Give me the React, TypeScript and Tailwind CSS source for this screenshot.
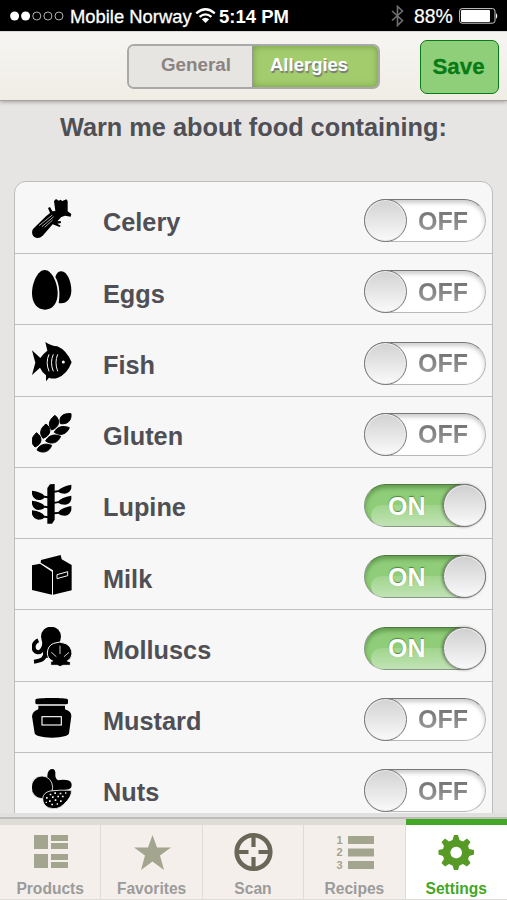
import { useState } from "react"
import type { ReactNode } from "react"

const allergens: { name: string; on: boolean; icon: ReactNode }[] = [
  {
    name: "Celery",
    on: false,
    icon: (
      <>
        <path d="M3 90 L42 52 L54 42 L48 27 L54 24 L61 37 L70 36 L66 6 L72 0 L80 5 L85 2 L91 6 L103 1 L107 6 L107 37 L118 45 L116 53 L99 50 L88 54 L76 67 L86 66 L87 72 L76 74 L86 80 L83 84 L62 76 L32 110 Q19 122 6 113 Q-4 104 3 90Z" />
        <path d="M21 80 L61 48 M30 83 L65 53 M38 85 L62 63" stroke="#f7f7f7" strokeWidth="2" fill="none" />
      </>
    ),
  },
  {
    name: "Eggs",
    on: false,
    icon: (
      <>
        <path d="M88 4 C106 4 119 37 118 63 C117 88 102 104 80 99 C84 80 84 43 70 21 C74 9 80 4 88 4Z" />
        <path d="M38 0 C60 0 77 40 77 70 C77 101 61 119 39 119 C16 119 0 100 0 70 C0 39 17 0 38 0Z" />
      </>
    ),
  },
  {
    name: "Fish",
    on: false,
    icon: (
      <>
        <path d="M0 25 L25 48 Q31 37 46 26 L40 0 Q57 12 76 13 Q103 24 119 61 Q105 98 76 108 Q62 112 51 107 L42 118 L42 100 Q30 91 24 77 L0 99 L10 62Z" />
        <path d="M51 37 Q40 61 51 88 M64 37 Q53 61 64 88 M77 37 Q67 61 77 88" fill="none" stroke="#f7f7f7" strokeWidth="3" />
        <circle cx="94" cy="60" r="4.5" fill="#f7f7f7" />
      </>
    ),
  },
  {
    name: "Gluten",
    on: false,
    icon: (
      <g stroke="#000" strokeWidth="3" strokeLinejoin="round">
        <path d="M117 2 C90 0 80 13 85 32 C108 35 119 22 117 2Z" />
        <path d="M69 7 C49 22 48 38 59 51 C82 43 87 22 69 7Z" />
        <path d="M42 33 C23 47 22 63 33 76 C56 68 61 47 42 33Z" />
        <path d="M14 59 C-3 72 -4 91 9 102 C31 93 33 74 14 59Z" />
        <path d="M112 44 C91 36 74 42 67 58 C85 70 104 64 112 44Z" />
        <path d="M86 70 C66 61 48 68 41 84 C59 96 78 90 86 70Z" />
        <path d="M59 97 C40 89 22 95 15 111 C32 123 52 117 59 97Z" />
      </g>
    ),
  },
  {
    name: "Lupine",
    on: true,
    icon: (
      <>
        <path d="M46 12 L54 1 L68 0 V107 L60 119 H46Z" />
        <path d="M66 20 L79 19 Q88 8 118 2 V13 Q114 28 99 29 Q85 29 79 24 L66 26Z M66 54 L79 52 Q88 40 118 35 V46 Q114 62 99 62 Q85 62 79 57 L66 59Z M66 85 L79 84 Q88 71 118 66 V78 Q114 94 99 95 Q85 95 79 89 L66 91Z" />
        <path d="M48 37 L37 35 Q29 24 0 20 V31 Q5 47 19 48 Q32 48 37 41 L48 43Z M48 67 L37 65 Q29 54 0 50 V61 Q5 77 19 78 Q32 78 37 71 L48 73Z M48 97 L37 95 Q29 83 0 79 V91 Q5 106 19 107 Q32 107 37 101 L48 103Z" />
      </>
    ),
  },
  {
    name: "Milk",
    on: true,
    icon: (
      <>
        <path d="M27 15 L86 0 L89 13 L119 30 V106 L63 119 V46 L26 23Z" />
        <path d="M0 31 L24 26 L60 50 V119 L0 105Z" />
        <path d="M75 59 L107 50 V62 L75 71Z" fill="none" stroke="#f7f7f7" strokeWidth="3" />
      </>
    ),
  },
  {
    name: "Molluscs",
    on: true,
    icon: (
      <>
        <circle cx="57" cy="29" r="30" />
        <path d="M19 40 C0 48 1 74 17 76 C29 77 34 66 38 48" fill="none" stroke="#000" strokeWidth="12" />
        <path d="M30 40 H54 V92 H38 L33 72Z" />
        <path d="M40 74 C40 94 32 101 6 104" fill="none" stroke="#000" strokeWidth="12" />
        <path d="M62 102 Q46 95 46 78 Q47 56 65 49 Q83 41 102 50 Q120 60 120 81 Q119 95 106 102 L115 104 V115 H94 L84 119 L76 115 H56 V103Z" stroke="#f7f7f7" strokeWidth="3" />
        <path d="M84 56 V81 M58 76 L73 89 M111 76 L96 89" stroke="#f7f7f7" strokeWidth="2.5" />
      </>
    ),
  },
  {
    name: "Mustard",
    on: false,
    icon: (
      <>
        <path d="M10 6 Q10 1 28 1 Q60 -2 91 1 Q108 1 108 6 V15 Q108 19 102 19 H16 Q10 19 10 15Z" />
        <path d="M19 23 H99 V34 Q119 40 118 55 L111 106 Q108 118 60 119 Q12 118 8 106 L0 55 Q1 40 19 34Z" />
        <rect x="30" y="56" width="58" height="25" fill="none" stroke="#f7f7f7" strokeWidth="3.5" />
      </>
    ),
  },
  {
    name: "Nuts",
    on: false,
    icon: (
      <>
        <path d="M46 20 Q48 0 60 0 Q72 0 70 17 Q69 27 78 34 Q88 31 103 33 Q119 35 119 48 Q119 61 104 62 L65 65 L45 45Z" />
        <ellipse cx="30" cy="55" rx="32" ry="34" stroke="#f7f7f7" strokeWidth="2.5" />
        <path d="M32 88 Q34 71 54 66 Q84 62 118 64 Q121 83 94 107 Q76 125 49 116 Q32 108 32 88Z" stroke="#f7f7f7" strokeWidth="2.5" />
        <path d="M53 74h5v5h-5z M67 70h5v5h-5z M83 71h5v5h-5z M99 70h4v4h-4z M42 84h5v5h-5z M60 82h5v5h-5z M76 80h5v5h-5z M90 80h5v5h-5z M51 94h5v5h-5z M68 91h5v5h-5z M84 94h5v5h-5z M41 98h4v4h-4z M58 104h5v5h-5z M74 103h4v4h-4z" fill="#f7f7f7" />
      </>
    ),
  },
]

const tabs: { name: string; icon: ReactNode }[] = [
  {
    name: "Products",
    icon: (
      <g fill="#a3a58e">
        <path d="M4 3h14v14H4z M4 22h14v14H4z M21 3h17v6H21z M21 11h17v6H21z M21 22h17v6H21z M21 30h17v6H21z" />
      </g>
    ),
  },
  {
    name: "Favorites",
    icon: <path fill="#a3a58e" d="M20.5 3 L25 15.5 H39 L28 23.5 L32 38 L20.5 29.5 L9 38 L13 23.5 L2 15.5 H16Z" />,
  },
  {
    name: "Scan",
    icon: (
      <g fill="none" stroke="#6a6658">
        <circle cx="20.5" cy="20" r="16.8" strokeWidth="4.6" />
        <path d="M20.5 4V15 M20.5 25V36 M4.5 20H15.5 M25.5 20H36.5" strokeWidth="4.2" />
      </g>
    ),
  },
  {
    name: "Recipes",
    icon: (
      <g fill="#a3a58e">
        <path d="M14 4h26v8H14z M14 16.5h26v8H14z M14 29h26v8H14z" />
        <g fontSize="11" fontWeight="bold">
          <text x="2.5" y="11.7">1</text>
          <text x="2.5" y="24.3">2</text>
          <text x="2.5" y="36.9">3</text>
        </g>
      </g>
    ),
  },
  {
    name: "Settings",
    icon: (
      <path
        fill="#579a26"
        fillRule="evenodd"
        d="M16.5 8 L18 3 H22 L23.5 8 L27 9.5 L31 6.5 L34.5 10 L32 14 L33.2 17 L38 18 V22.5 L33.2 24 L32 27 L34.5 31 L31 34.5 L27 32 L23.5 33.5 L22 38 H18 L16.5 33.5 L13 32 L9 34.5 L5.5 31 L8 27 L7 24 L2.5 22.5 V18 L7 17 L8 14 L5.5 10 L9 6.5 L13 9.5Z M20.2 14.8 a5.8 5.8 0 1 0 .01 0Z"
      />
    ),
  },
]

function Toggle({ on, onClick }: { on: boolean; onClick: () => void }) {
  if (on) {
    return (
      <button
        onClick={onClick}
        className="relative flex h-[43px] w-[122px] items-center rounded-full border border-[#8a9984] border-t-[#50783f] bg-[#8fcd78] pt-px pl-[23px] text-[25px] font-bold text-white shadow-[inset_0_3px_4px_rgba(30,80,20,0.4)]"
      >
        <span className="absolute bottom-0 left-[6px] h-[21px] w-[108px] rounded-l-full bg-gradient-to-b from-white/15 to-white/45" />
        <span className="relative leading-none [text-shadow:0_-1px_1px_#4d8638]">ON</span>
        <span className="absolute -top-px -right-px h-[43px] w-[43px] rounded-full border border-[#777] bg-gradient-to-b from-[#cfcfcf] to-[#fafafa] shadow-[-1px_0_3px_rgba(0,0,0,0.4),inset_0_0_0_1px_#eeeeee]" />
      </button>
    )
  }
  return (
    <button
      onClick={onClick}
      className="relative flex h-[43px] w-[122px] items-center rounded-full border border-[#b9b9b9] border-t-[#777] bg-white pt-px pl-[53px] text-[25px] font-bold shadow-[inset_0_3px_4px_rgba(0,0,0,0.2)]"
    >
      <span className="absolute -top-px -left-px h-[43px] w-[43px] rounded-full border border-[#777] bg-gradient-to-b from-[#d2d2d2] to-[#fafafa] shadow-[inset_0_0_0_1px_#eeeeee]" />
      <span className="bg-gradient-to-b from-[#707070] to-[#a0a0a0] bg-clip-text leading-none text-transparent">OFF</span>
    </button>
  )
}

function StatusBar() {
  return (
    <div className="flex h-[31px] shrink-0 items-center bg-black pt-px pl-[10px] text-white">
      <svg width="54" height="10" viewBox="0 0 54 10">
        <circle cx="4.6" cy="5" r="4.5" fill="#fff" />
        <circle cx="15.6" cy="5" r="4.5" fill="#fff" />
        <g fill="none" stroke="#ddd" strokeWidth="0.8">
          <circle cx="26.8" cy="5" r="4" />
          <circle cx="37.9" cy="5" r="4" />
          <circle cx="49" cy="5" r="4" />
        </g>
      </svg>
      <span className="mt-px ml-[6px] w-[125px] text-[18.4px] whitespace-nowrap [-webkit-text-stroke:0.3px_white]">Mobile Norway</span>
      <svg width="21" height="16" viewBox="0 0 21 16" fill="none" stroke="#fff" strokeWidth="2.3">
        <path d="M1.2 5.3 Q10.5 -2.7 19.8 5.3 M4.6 8.9 Q10.5 3.9 16.4 8.9" />
        <path d="M6.8 11.3 Q10.5 8.3 14.2 11.3 L10.5 15Z" fill="#fff" stroke="none" />
      </svg>
      <span className="mt-px ml-[3px] text-[18.5px] font-bold whitespace-nowrap">5:14 PM</span>
      <svg className="ml-[102px]" width="13" height="22" viewBox="0 0 13 22" fill="none" stroke="#707070" strokeWidth="1.6">
        <path d="M1 6 L11.5 15.5 L6.5 20.5 V1.5 L11.5 6 L1 15.5" />
      </svg>
      <span className="mt-px ml-[10px] w-[45px] text-[19.4px] whitespace-nowrap [-webkit-text-stroke:0.2px_white]">88%</span>
      <svg width="40" height="16" viewBox="0 0 40 16">
        <rect x="0.6" y="0.6" width="35.4" height="14.6" rx="2.5" fill="none" stroke="#ccc" strokeWidth="1" />
        <rect x="2" y="2" width="29" height="12" rx="1" fill="#fff" />
        <path d="M37 5 Q39.5 7.8 37 11Z" fill="#fff" />
      </svg>
    </div>
  )
}

export default function App() {
  const [items, setItems] = useState(allergens)

  const toggle = (name: string) => {
    setItems(items.map((i) => (i.name === name ? { ...i, on: !i.on } : i)))
  }

  return (
    <div className="flex h-[900px] w-[507px] flex-col overflow-hidden bg-[#e6e5e3] font-['Liberation_Sans',Arial,sans-serif]">
      <StatusBar />

      <header className="z-10 flex h-[70px] shrink-0 items-start border-t border-b border-t-[#d8d8d6] border-b-[#a7a49f] bg-gradient-to-b from-[#f6f5f2] to-[#f0ede5] pl-[127px] shadow-[0_1px_4px_rgba(0,0,0,0.3)]">
        <div className="mt-[12px] flex h-[45px] w-[253px] overflow-hidden rounded-[7px] border-2 border-[#a9a9a8] text-[18.8px] leading-[38px] font-bold">
          <div className="w-[124px] border-r border-[#999b90] bg-[#e6e5e2] pl-[32px] text-[#8b8380]">General</div>
          <div className="flex-1 bg-[#a3cd6d] pl-[17px] text-[18.5px] text-white shadow-[inset_0_0_7px_rgba(70,110,30,0.55)] [text-shadow:1px_2px_1px_#777]">
            Allergies
          </div>
        </div>
        <button className="mt-[8px] ml-[40px] h-[54px] w-[79px] rounded-[7px] border border-[#087a16] bg-[#90cf7a] pr-[2px] text-[22.3px] font-bold text-[#087a16] [-webkit-text-stroke:0.3px_#087a16]">
          Save
        </button>
      </header>

      <main className="h-[712px] shrink-0 overflow-hidden px-[14px]">
        <h1 className="mt-[11px] pl-[46px] text-[25.3px] leading-[30px] font-bold whitespace-nowrap text-[#4f4f55]">
          Warn me about food containing:
        </h1>
        <div className="mt-[39px] rounded-t-[12px] border border-[#bdbdbd] bg-[#f7f7f7] pt-[0.75px]">
          {items.map((item) => (
            <div key={item.name} className="flex h-[71.25px] items-start border-b border-[#bebebe] pr-[6px] pl-[17px]">
              <svg className="mt-[16.25px] shrink-0" width="40" height="40" viewBox="0 0 120 120">
                {item.icon}
              </svg>
              <span className="mt-[24.5px] ml-[31px] flex-1 text-[25.3px] leading-[30px] font-bold text-[#4f4f55]">{item.name}</span>
              <div className="mt-[16.25px]">
                <Toggle on={item.on} onClick={() => toggle(item.name)} />
              </div>
            </div>
          ))}
        </div>
      </main>

      <nav className="flex h-[87px] shrink-0 flex-col">
        <div className="h-[4px] bg-[#e0e0df]" />
        <div className="h-[2px] bg-[#bdbcb9]" />
        <div className="grid flex-1 grid-cols-5">
          {tabs.map((tab) => {
            const active = tab.name === "Settings"
            return (
              <div
                key={tab.name}
                className={
                  active
                    ? "flex flex-col items-center border-t-[6px] border-b border-t-[#43a726] border-b-[#dddcd6] bg-white text-[#43a726]"
                    : "flex flex-col items-center border-t-[6px] border-r border-b border-[#dddcd6] bg-[#f4efeb] text-[#9b9b9b]"
                }
              >
                <svg className="mt-[7px]" width="40" height="40" viewBox="0 0 40 40">
                  {tab.icon}
                </svg>
                <span className="mt-[8px] text-[15.6px] leading-[18px] font-bold">{tab.name}</span>
              </div>
            )
          })}
        </div>
      </nav>
    </div>
  )
}
